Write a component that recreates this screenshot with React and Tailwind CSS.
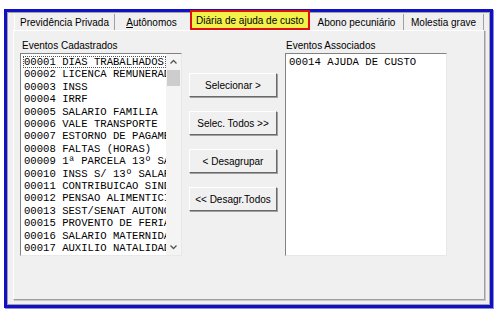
import React from "react";

const cadastrados = [
  "00001 DIAS TRABALHADOS",
  "00002 LICENCA REMUNERADA",
  "00003 INSS",
  "00004 IRRF",
  "00005 SALARIO FAMILIA",
  "00006 VALE TRANSPORTE",
  "00007 ESTORNO DE PAGAMENTO",
  "00008 FALTAS (HORAS)",
  "00009 1ª PARCELA 13º SALARIO",
  "00010 INSS S/ 13º SALARIO",
  "00011 CONTRIBUICAO SINDICAL",
  "00012 PENSAO ALIMENTICIA",
  "00013 SEST/SENAT AUTONOMO",
  "00015 PROVENTO DE FERIAS",
  "00016 SALARIO MATERNIDADE",
  "00017 AUXILIO NATALIDADE",
];

const sans = { fontFamily: '"Liberation Sans", Arial, sans-serif' };
const mono = { fontFamily: '"Liberation Mono", "Courier New", monospace' };

const Tab = ({ label, className = "" }) => (
  <div
    className={`h-[16px] flex items-center justify-center text-[10px] text-black border-r border-[#a0a0a0] ${className}`}
  >
    {label}
  </div>
);

const WinButton = ({ children }) => (
  <button className="w-[88px] h-[24px] bg-[#f0f0f0] text-[10px] text-black border border-t-white border-l-white border-b-[#696969] border-r-[#696969] shadow-[1px_1px_0_#a0a0a0]">
    {children}
  </button>
);

const App = () => {
  return (
    <div className="w-[501px] h-[317px] bg-white pt-[9px] pl-[4px]" style={sans}>
      <div className="w-[489px] h-[299px] border-[3px] border-[#1010c4] shadow-[1px_1px_0_#8c8cd8] bg-[#f0f0f0]">
        <div className="h-full border border-[#a0a0a0] pl-[5px] pr-[4px] pb-[4px] flex flex-col">
          {/* tab strip */}
          <div className="flex items-end h-[17px] pl-[1px]">
            <Tab label="Previdência Privada" className="w-[101px] border-l border-l-white" />
            <Tab label={<span><u>A</u>utônomos</span>} className="w-[73px] border-r-0" />
            <div className="relative z-10 -mt-[6px] ml-[2px] w-[120px] h-[20px] border-2 border-[#e01010] bg-[#f2f24a] flex items-center justify-center text-[10px] text-black">
              Diária de ajuda de custo
            </div>
            <Tab label="Abono pecuniário" className="w-[94px]" />
            <Tab label="Molestia grave" className="w-[80px]" />
          </div>

          {/* tab page */}
          <div className="flex-1 border border-t-white border-l-white border-b-[#a0a0a0] border-r-[#a0a0a0] shadow-[1px_1px_0_#c8c8c8] pl-[6px] pt-[9px] flex">
            {/* left column */}
            <div className="w-[162px] flex flex-col">
              <div className="text-[10px] leading-[12px] text-black pl-[2px] mb-[1px]">Eventos Cadastrados</div>
              <div className="h-[203px] flex bg-white border border-t-[#828282] border-l-[#828282] border-b-[#e8e8e8] border-r-[#e8e8e8]">
                <div className="flex-1 overflow-hidden pt-[2px] pl-[2px] text-[10.6px] leading-[12.4px] text-black" style={mono}>
                  {cadastrados.map((item, i) => (
                    <div
                      key={item}
                      className={`whitespace-nowrap pl-[1px] ${i === 0 ? "outline outline-1 outline-dotted outline-[#555] -outline-offset-1" : ""}`}
                    >
                      {item}
                    </div>
                  ))}
                </div>
                <div className="w-[15px] flex flex-col items-center bg-[#f4f4f4]">
                  <svg width="9" height="12" viewBox="0 0 9 12" className="mt-[2px]">
                    <path d="M1.5 7.5 L4.5 4.5 L7.5 7.5" fill="none" stroke="#555" strokeWidth="1.3" />
                  </svg>
                  <div className="w-[13px] h-[16px] bg-[#cdcdcd] mt-[2px]" />
                  <div className="flex-1" />
                  <svg width="9" height="12" viewBox="0 0 9 12" className="mb-[2px]">
                    <path d="M1.5 4.5 L4.5 7.5 L7.5 4.5" fill="none" stroke="#555" strokeWidth="1.3" />
                  </svg>
                </div>
              </div>
            </div>

            {/* buttons */}
            <div className="w-[88px] ml-[7px] pt-[33px] flex flex-col gap-[14px]">
              <WinButton>Selecionar &gt;</WinButton>
              <WinButton>Selec. Todos &gt;&gt;</WinButton>
              <WinButton>&lt; Desagrupar</WinButton>
              <WinButton>&lt;&lt; Desagr.Todos</WinButton>
            </div>

            {/* right column */}
            <div className="w-[162px] ml-[8px] flex flex-col">
              <div className="text-[10px] leading-[12px] text-black pl-[1px] mb-[1px]">Eventos Associados</div>
              <div className="h-[203px] bg-white border border-t-[#828282] border-l-[#828282] border-b-[#e8e8e8] border-r-[#e8e8e8] pt-[2px] pl-[3px] text-[10.6px] leading-[12.4px] text-black" style={mono}>
                <div className="whitespace-nowrap">00014 AJUDA DE CUSTO</div>
              </div>
            </div>
          </div>
        </div>
      </div>
    </div>
  );
};

export default App;
